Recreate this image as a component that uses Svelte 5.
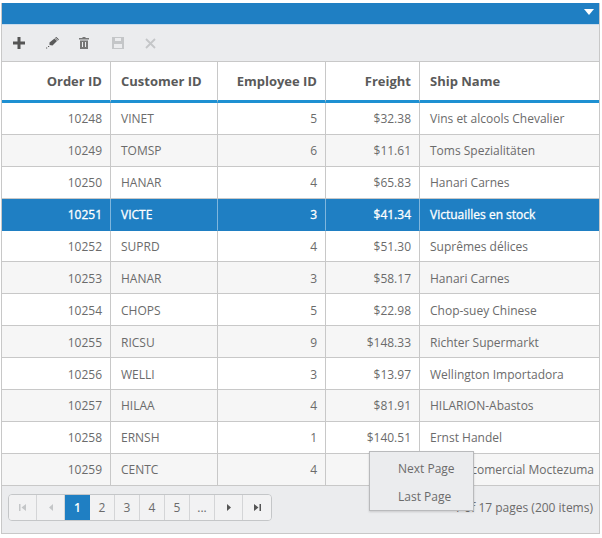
<script>
	const orders = [
		[10248, 'VINET', 5, '$32.38', 'Vins et alcools Chevalier'],
		[10249, 'TOMSP', 6, '$11.61', 'Toms Spezialitäten'],
		[10250, 'HANAR', 4, '$65.83', 'Hanari Carnes'],
		[10251, 'VICTE', 3, '$41.34', 'Victuailles en stock'],
		[10252, 'SUPRD', 4, '$51.30', 'Suprêmes délices'],
		[10253, 'HANAR', 3, '$58.17', 'Hanari Carnes'],
		[10254, 'CHOPS', 5, '$22.98', 'Chop-suey Chinese'],
		[10255, 'RICSU', 9, '$148.33', 'Richter Supermarkt'],
		[10256, 'WELLI', 3, '$13.97', 'Wellington Importadora'],
		[10257, 'HILAA', 4, '$81.91', 'HILARION-Abastos'],
		[10258, 'ERNSH', 1, '$140.51', 'Ernst Handel'],
		[10259, 'CENTC', 4, '$3.25', 'Centro comercial Moctezuma']
	];
	const selectedId = 10251;
	const pages = ['1', '2', '3', '4', '5', '...'];
</script>

<div class="grid">
	<div class="titlebar">
		<svg width="10" height="6" viewBox="0 0 10 6"><path d="M0 0h10L5 6z" fill="#fff" /></svg>
	</div>

	<div class="toolbar">
		<button class="tool" aria-label="Add">
			<svg width="12" height="12" viewBox="0 0 12 12"><path d="M4.5 0h3v4.500H12v3H7.500V12h-3V7.500H0v-3h4.500z" fill="#555" /></svg>
		</button>
		<button class="tool" aria-label="Edit">
			<svg width="13" height="12" viewBox="0 0 13 12"><path d="M3.500 5.500 8.500 1.500l2.500 2.500-4.500 4.500-3-.5z" fill="#5a5a5a" /><path d="M9.500 1l.8-.8 2.200 2.200-.9.9zM0 11h1.200M2 9.500h1.200" stroke="#5a5a5a" stroke-width="1" fill="none" /></svg>
		</button>
		<button class="tool" aria-label="Delete">
			<svg width="10" height="12" viewBox="0 0 10 12"><path d="M3.500 0h3v1H10v1.500H0V1h3.500zM1 3.500h8V12H1zM3 5v5h1V5zM6 5v5h1V5z" fill="#777" fill-rule="evenodd" /></svg>
		</button>
		<button class="tool" aria-label="Save">
			<svg width="12" height="12" viewBox="0 0 12 12"><path d="M0 0h12v12H0zM3 1v3h6V1zM2 7v4h8V7z" fill="#c4c6c8" fill-rule="evenodd" /></svg>
		</button>
		<button class="tool" aria-label="Cancel">
			<svg width="11" height="11" viewBox="0 0 11 11"><path d="M1 1l9 9M10 1l-9 9" stroke="#c4c6c8" stroke-width="1.800" /></svg>
		</button>
	</div>

	<table>
		<colgroup>
			<col class="c1" /><col class="c2" /><col class="c3" /><col class="c4" /><col />
		</colgroup>
		<thead>
			<tr>
				<th class="num">Order ID</th>
				<th>Customer ID</th>
				<th class="num">Employee ID</th>
				<th class="num">Freight</th>
				<th>Ship Name</th>
			</tr>
		</thead>
		<tbody>
			{#each orders as row, i}
				<tr class:alt={i % 2 === 1} class:selected={row[0] === selectedId}>
					<td class="num">{row[0]}</td>
					<td>{row[1]}</td>
					<td class="num">{row[2]}</td>
					<td class="num">{row[3]}</td>
					<td>{row[4]}</td>
				</tr>
			{/each}
		</tbody>
	</table>

	<div class="pager">
		<div class="pages">
			<button class="nav" aria-label="First page">
				<svg width="7" height="7" viewBox="0 0 7 7"><path d="M0 0h1.500v7H0zM7 0v7L2.500 3.500z" fill="#c4c6c8" /></svg>
			</button>
			<button class="nav" aria-label="Previous page">
				<svg width="4" height="7" viewBox="0 0 4 7"><path d="M4 0v7L0 3.500z" fill="#c4c6c8" /></svg>
			</button>
			{#each pages as page, i}
				<button class="page" class:current={i === 0}>{page}</button>
			{/each}
			<button class="nav" aria-label="Next page">
				<svg width="4" height="7" viewBox="0 0 4 7"><path d="M0 0v7l4-3.500z" fill="#555" /></svg>
			</button>
			<button class="nav" aria-label="Last page">
				<svg width="7" height="7" viewBox="0 0 7 7"><path d="M0 0v7l4.500-3.500zM5.500 0H7v7H5.500z" fill="#555" /></svg>
			</button>
		</div>
		<span class="summary">1 of 17 pages (200 items)</span>
	</div>

	<div class="menu">
		<div class="menu-item">Next Page</div>
		<div class="menu-item">Last Page</div>
	</div>
</div>

<style>
	:global(body) {
		margin: 0;
		background: #fff;
	}

	.grid {
		position: relative;
		box-sizing: border-box;
		width: 599px;
		margin: 3px 0 0 1px;
		border: 1px solid #c8c8c8;
		border-top: none;
		font-family: "Open Sans", "Noto Sans", sans-serif;
		font-size: 12px;
		color: #6b6b6b;
	}

	.titlebar {
		height: 22px;
		background: #1f7fc3;
		display: flex;
		justify-content: flex-end;
		padding: 6px 5px 0 0;
		box-sizing: border-box;
		border-bottom: 1px solid #c9dced;
	}

	.toolbar {
		height: 37px;
		box-sizing: border-box;
		background: #ebecee;
		border-bottom: 1px solid #c8c8c8;
		display: flex;
		align-items: center;
		padding-left: 11px;
	}

	.tool {
		width: 33px;
		height: 20px;
		padding: 0;
		border: none;
		background: none;
		display: flex;
		align-items: center;
		justify-content: flex-start;
	}

	table {
		width: 100%;
		border-collapse: separate;
		border-spacing: 0;
		table-layout: fixed;
	}

	.c1 { width: 109px; }
	.c2 { width: 107px; }
	.c3 { width: 108px; }
	.c4 { width: 94px; }

	th {
		height: 41px;
		box-sizing: border-box;
		padding: 0 8px 0 10px;
		text-align: left;
		font-size: 13px;
		font-weight: 700;
		color: #5a5a5a;
		background: #fff;
		border-right: 1px solid #c8c8c8;
		border-bottom: 3px solid #1e90d2;
	}

	td {
		height: 31.9px;
		box-sizing: border-box;
		padding: 1px 8px 0 10px;
		border-right: 1px solid #c8c8c8;
		border-bottom: 1px solid #c8c8c8;
		white-space: nowrap;
		overflow: hidden;
	}

	th:last-child,
	td:last-child {
		border-right: none;
	}

	.num {
		text-align: right;
	}

	.alt td {
		background: #f6f6f6;
	}

	.selected td {
		background: #1f7fc3;
		color: #fff;
		-webkit-text-stroke: 0.3px #fff;
		border-right-color: #7fb6dd;
		border-bottom-color: #1f7fc3;
	}

	.pager {
		height: 47px;
		box-sizing: border-box;
		background: #ebecee;
		display: flex;
		align-items: flex-start;
		justify-content: space-between;
		padding: 8px 6px 0 6px;
	}

	.pages {
		display: flex;
		height: 27px;
		box-sizing: border-box;
		border: 1px solid #c4c6c8;
		border-radius: 4px;
		overflow: hidden;
	}

	.pages button {
		box-sizing: border-box;
		height: 25px;
		padding: 0;
		border: none;
		border-right: 1px solid #d4d5d7;
		background: #f2f2f3;
		font: inherit;
		color: #6b6b6b;
		display: flex;
		align-items: center;
		justify-content: center;
	}

	.pages button:last-child {
		border-right: none;
	}

	.nav {
		width: 28px;
	}

	.page {
		width: 25px;
	}

	.pages .current {
		background: #1f7fc3;
		color: #fff;
		font-weight: 600;
		border-right: none;
	}

	.summary {
		font-size: 12px;
		line-height: 27px;
	}

	.menu {
		position: absolute;
		left: 367px;
		top: 448px;
		width: 105px;
		height: 60px;
		box-sizing: border-box;
		background: #ebecee;
		border: 1px solid #b9babc;
		box-shadow: 0 1px 2px rgba(0, 0, 0, 0.15);
		padding: 3px 0 0 28px;
	}

	.menu-item {
		height: 28px;
		line-height: 28px;
	}
</style>
